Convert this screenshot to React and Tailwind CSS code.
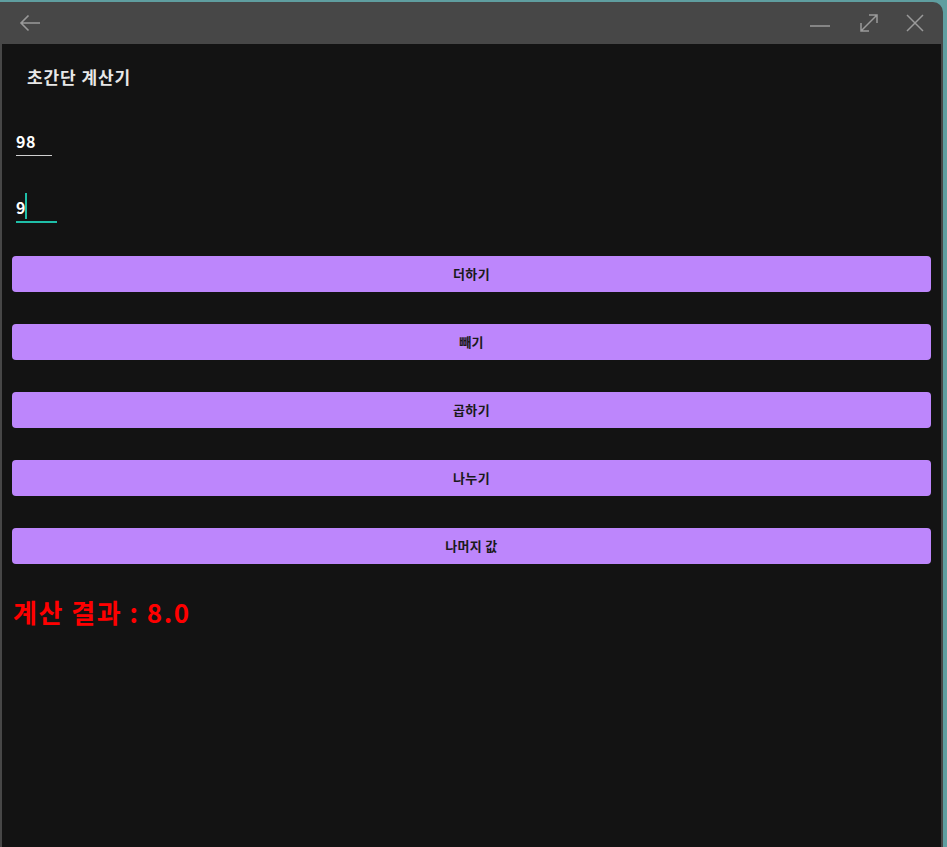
import React, { useState } from 'react';

const font = { fontFamily: '"Noto Sans CJK KR", "Noto Sans", sans-serif' };

const ops = ['더하기', '빼기', '곱하기', '나누기', '나머지 값'];

const App = () => {
  const [a, setA] = useState('98');
  const [b, setB] = useState('9');

  return (
    <div className="w-[947px] h-[847px] bg-[#5f9ea0] overflow-hidden" style={font}>
      <div className="w-[943px] h-[847px] pt-[2px]">
        <div className="h-full flex flex-col bg-[#474747] rounded-tr-[10px] overflow-hidden">
          {/* Title bar */}
          <div className="h-[42px] flex items-center shrink-0">
            <svg className="ml-[19px]" width="22" height="18" viewBox="0 0 22 18" fill="none" stroke="#9a9a9a" strokeWidth="1.6">
              <path d="M21 9H2M9.5 1.5L2 9l7.5 7.5" />
            </svg>
            <div className="flex-1" />
            <svg width="20" height="20" viewBox="0 0 20 20" fill="none" stroke="#9a9a9a" strokeWidth="1.5" className="mr-[29px]">
              <path d="M0 13h20" />
            </svg>
            <svg width="20" height="20" viewBox="0 0 20 20" fill="none" stroke="#9a9a9a" strokeWidth="1.5" className="mr-[27px]">
              <path d="M2 18L18 2M10 2h8v8M2 10v8h8" />
            </svg>
            <svg width="18" height="18" viewBox="0 0 18 18" fill="none" stroke="#9a9a9a" strokeWidth="1.5" className="mr-[19px]">
              <path d="M1 1l16 16M17 1L1 17" />
            </svg>
          </div>

          {/* Content */}
          <div className="flex-1 ml-[2px] mr-[2px] bg-[#131313] flex flex-col">
            <h1 className="ml-[25px] mt-[20px] text-[17px] font-bold tracking-[0.9px] text-[#e8e8e8] leading-[26px]">
              초간단 계산기
            </h1>

            <div className="ml-[14px] mt-[38px] w-[36px] border-b border-[#d0d0d0]">
              <input
                value={a}
                onChange={(e) => setA(e.target.value)}
                className="w-full bg-transparent text-white text-[16px] font-bold tracking-[0.5px] leading-[27px] h-[27px] outline-none"
              />
            </div>

            <div className="ml-[14px] mt-[37px] w-[41px] border-b-2 border-[#1fbfa8] flex items-center">
              <span className="text-white text-[16px] font-bold leading-[28px]">{b}</span>
              <span className="w-[2px] h-[26px] -mt-[2px] bg-[#1fbfa8]" />
            </div>

            <div className="mx-[10px] mt-[33px] flex flex-col gap-[32px]">
              {ops.map((op) => (
                <button
                  key={op}
                  className="h-[36px] rounded-[4px] bg-[#bd86fc] text-[#1a1a1a] text-[13px] font-bold tracking-[0.3px]"
                >
                  {op}
                </button>
              ))}
            </div>

            <p className="ml-[11px] mt-[31px] text-[#ff0000] text-[26px] font-bold tracking-[1.5px] leading-[34px]">
              계산 결과 : 8.0
            </p>
          </div>
        </div>
      </div>
    </div>
  );
};

export default App;
